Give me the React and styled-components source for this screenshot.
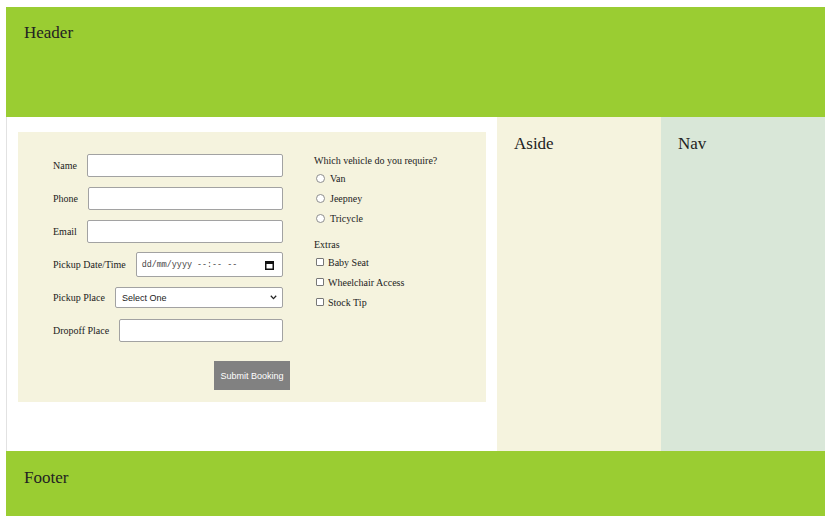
import React from 'react';
import styled, { createGlobalStyle } from 'styled-components';

const GlobalStyle = createGlobalStyle`
  body {
    margin: 0;
    background: #fff;
    font-family: "Liberation Serif", "Times New Roman", serif;
    color: #222;
  }
`;

const Page = styled.div`
  width: 819px;
  margin: 7px 0 0 6px;
  display: grid;
  grid-template-columns: 491px 164px 164px;
  grid-template-rows: 110px 334px 65px;
`;

const Header = styled.header`
  grid-column: 1 / -1;
  background: #9acd32;
  padding: 16px 18px;
  font-size: 17px;
`;

const Footer = styled.footer`
  grid-column: 1 / -1;
  background: #9acd32;
  padding: 17px 18px;
  font-size: 17px;
`;

const Main = styled.main`
  border-left: 1px solid #e2e2e2;
  padding: 15px 11px 0 11px;
`;

const Side = styled.div`
  background: ${(p) => p.$bg};
  padding: 17px 17px;
  font-size: 17px;
`;

const FormBox = styled.form`
  height: 270px;
  box-sizing: border-box;
  background: #f5f3de;
  display: flex;
  gap: 24px;
  padding: 17px 0 12px 35px;
  font-size: 10px;
`;

const LeftCol = styled.div`
  width: 237px;
`;

const Row = styled.div`
  height: 33px;
  display: flex;
  align-items: center;
  gap: 10px;
  padding-right: 7px;
`;

const Label = styled.label`
  white-space: nowrap;
`;

const Input = styled.input`
  flex: 1;
  min-width: 0;
  height: 23px;
  box-sizing: border-box;
  border: 1px solid #a2a2a2;
  border-radius: 2px;
  background: #fff;
  padding: 0 6px;
`;

const DateBox = styled.div`
  flex: 1;
  height: 25px;
  box-sizing: border-box;
  border: 1px solid #a2a2a2;
  border-radius: 2px;
  background: #fff;
  display: flex;
  align-items: center;
  justify-content: space-between;
  padding: 0 8px 0 5px;
  font-family: "Liberation Mono", "Courier New", monospace;
  font-size: 8.4px;
  color: #444;
  white-space: pre;
`;

const SelectWrap = styled.div`
  flex: 1;
  position: relative;
  display: flex;
`;

const Select = styled.select`
  flex: 1;
  height: 21px;
  box-sizing: border-box;
  border: 1px solid #a2a2a2;
  border-radius: 2px;
  background: #fff;
  appearance: none;
  padding: 0 6px;
  font-family: "Liberation Sans", Arial, sans-serif;
  font-size: 9px;
  color: #222;
`;

const Chevron = styled.svg`
  position: absolute;
  right: 6px;
  top: 8px;
  pointer-events: none;
`;

const ButtonRow = styled.div`
  display: flex;
  justify-content: flex-end;
  margin-top: 14px;
`;

const Button = styled.button`
  width: 76px;
  height: 29px;
  border: none;
  background: #818181;
  color: #fff;
  font-family: "Liberation Sans", Arial, sans-serif;
  font-size: 9px;
  padding: 0;
`;

const RightCol = styled.div`
  padding-top: 5px;
`;

const Legend = styled.div`
  height: 14px;
  line-height: 14px;
  margin-top: ${(p) => p.$top || 0}px;
`;

const Option = styled.label`
  height: 20px;
  display: flex;
  align-items: center;
  gap: ${(p) => (p.$check ? 4 : 5)}px;
  padding-left: 2px;
`;

const Radio = styled.input.attrs({ type: 'radio' })`
  appearance: none;
  margin: 0;
  width: 9px;
  height: 9px;
  border: 1px solid #8e8e8e;
  border-radius: 50%;
  background: #fff;
`;

const Check = styled.input.attrs({ type: 'checkbox' })`
  appearance: none;
  margin: 0;
  width: 8px;
  height: 8px;
  border: 1px solid #777;
  border-radius: 1px;
  background: #fff;
`;

const CalendarIcon = () => (
  <svg width="9" height="10" viewBox="0 0 9 10">
    <rect x="0.75" y="1.75" width="7.5" height="7.5" fill="none" stroke="#111" strokeWidth="1.5" />
    <rect x="0.75" y="1.5" width="7.5" height="2.5" fill="#111" />
  </svg>
);

const App = () => {
  return (
    <>
      <GlobalStyle />
      <Page>
        <Header>Header</Header>
        <Main>
          <FormBox onSubmit={(e) => e.preventDefault()}>
            <LeftCol>
              <Row>
                <Label>Name</Label>
                <Input type="text" />
              </Row>
              <Row>
                <Label>Phone</Label>
                <Input type="text" />
              </Row>
              <Row>
                <Label>Email</Label>
                <Input type="text" />
              </Row>
              <Row>
                <Label>Pickup Date/Time</Label>
                <DateBox>
                  <span>dd/mm/yyyy --:-- --</span>
                  <CalendarIcon />
                </DateBox>
              </Row>
              <Row>
                <Label>Pickup Place</Label>
                <SelectWrap>
                  <Select defaultValue="">
                    <option value="">Select One</option>
                  </Select>
                  <Chevron width="7" height="5" viewBox="0 0 7 5">
                    <path d="M0.8 0.8 L3.5 3.6 L6.2 0.8" fill="none" stroke="#222" strokeWidth="1.3" />
                  </Chevron>
                </SelectWrap>
              </Row>
              <Row>
                <Label>Dropoff Place</Label>
                <Input type="text" />
              </Row>
              <ButtonRow>
                <Button type="submit">Submit Booking</Button>
              </ButtonRow>
            </LeftCol>
            <RightCol>
              <Legend>Which vehicle do you require?</Legend>
              <Option>
                <Radio name="vehicle" />
                Van
              </Option>
              <Option>
                <Radio name="vehicle" />
                Jeepney
              </Option>
              <Option>
                <Radio name="vehicle" />
                Tricycle
              </Option>
              <Legend $top={10}>Extras</Legend>
              <Option $check>
                <Check />
                Baby Seat
              </Option>
              <Option $check>
                <Check />
                Wheelchair Access
              </Option>
              <Option $check>
                <Check />
                Stock Tip
              </Option>
            </RightCol>
          </FormBox>
        </Main>
        <Side $bg="#f5f3de">Aside</Side>
        <Side $bg="#d9e7d8">Nav</Side>
        <Footer>Footer</Footer>
      </Page>
    </>
  );
};

export default App;
